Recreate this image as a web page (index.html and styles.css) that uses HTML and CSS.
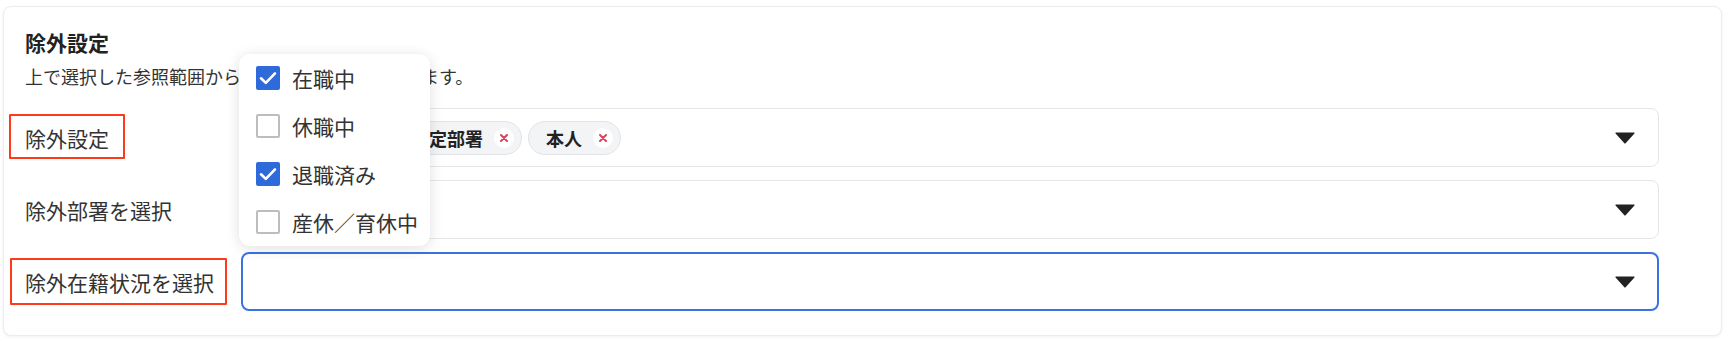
FILE: index.html
```html
<!DOCTYPE html>
<html lang="ja">
<head>
<meta charset="utf-8">
<title>除外設定</title>
<link rel="stylesheet" href="styles.css">
</head>
<body>
<section class="card">
  <h2 class="title">除外設定</h2>
  <p class="desc">上で選択した参照範囲から除外する条件を設定します。</p>
  <div class="rows">
    <div class="row">
      <div class="label"><span class="mark mark-a">除外設定</span></div>
      <div class="select">
        <div class="chips">
          <span class="chip">管理部門<span class="chip-x"><svg viewBox="0 0 10 10"><path d="M2 2L8 8M8 2L2 8"/></svg></span></span>
          <span class="chip">指定部署<span class="chip-x"><svg viewBox="0 0 10 10"><path d="M2 2L8 8M8 2L2 8"/></svg></span></span>
          <span class="chip">本人<span class="chip-x"><svg viewBox="0 0 10 10"><path d="M2 2L8 8M8 2L2 8"/></svg></span></span>
        </div>
        <svg class="caret" viewBox="0 0 20 12"><path d="M1 0.5H19a0.6 0.6 0 0 1 0.45 1L10.6 11.3a0.8 0.8 0 0 1-1.2 0L0.55 1.5A0.6 0.6 0 0 1 1 0.5Z"/></svg>
      </div>
    </div>
    <div class="row">
      <div class="label"><span>除外部署を選択</span></div>
      <div class="select">
        <div class="chips"></div>
        <svg class="caret" viewBox="0 0 20 12"><path d="M1 0.5H19a0.6 0.6 0 0 1 0.45 1L10.6 11.3a0.8 0.8 0 0 1-1.2 0L0.55 1.5A0.6 0.6 0 0 1 1 0.5Z"/></svg>
      </div>
    </div>
    <div class="row">
      <div class="label"><span class="mark mark-b">除外在籍状況を選択</span></div>
      <div class="select focused">
        <div class="chips"></div>
        <svg class="caret" viewBox="0 0 20 12"><path d="M1 0.5H19a0.6 0.6 0 0 1 0.45 1L10.6 11.3a0.8 0.8 0 0 1-1.2 0L0.55 1.5A0.6 0.6 0 0 1 1 0.5Z"/></svg>
      </div>
    </div>
  </div>
  <ul class="menu">
    <li class="opt"><span class="box checked"><svg viewBox="0 0 24 24"><path d="M5 12.3l4.8 4.6L19 7.4"/></svg></span>在職中</li>
    <li class="opt"><span class="box"></span>休職中</li>
    <li class="opt"><span class="box checked"><svg viewBox="0 0 24 24"><path d="M5 12.3l4.8 4.6L19 7.4"/></svg></span>退職済み</li>
    <li class="opt"><span class="box"></span>産休／育休中</li>
  </ul>
</section>
</body>
</html>
```
FILE: styles.css
```css
* { box-sizing: border-box; }
html, body { margin: 0; padding: 0; background: #ffffff; }
body {
  font-family: "Noto Sans CJK JP", "Noto Sans", sans-serif;
  color: #2b2b2b;
}
.card {
  position: relative;
  margin: 6px 3px 5px 3px;
  height: 330px;
  border: 1px solid #ececec;
  border-radius: 8px;
  background: #fff;
  box-shadow: 0 1px 3px rgba(0,0,0,0.06);
  padding: 21px 62px 0 21px;
}
.title {
  margin: 0;
  font-size: 21px;
  line-height: 28px;
  font-weight: 700;
  color: #222;
}
.desc {
  margin: 7px 0 0 0;
  font-size: 18px;
  line-height: 26px;
  color: #333;
}
.rows {
  margin-top: 19px;
  display: flex;
  flex-direction: column;
  gap: 13px;
}
.row {
  display: flex;
  align-items: center;
}
.label {
  width: 216px;
  flex: none;
  font-size: 21px;
  line-height: 28px;
  color: #333;
}
.mark { position: relative; display: inline-block; }
.mark::after {
  content: "";
  position: absolute;
  border: 2.5px solid #ff3a1a;
  border-radius: 1px;
}
.mark-a::after { left: -16px; right: -16px; top: -10px; bottom: -7px; }
.mark-b::after { left: -15px; right: -13px; top: -10px; bottom: -9px; }
.select {
  flex: 1;
  height: 59px;
  border: 1px solid #e6e6e6;
  border-radius: 8px;
  display: flex;
  align-items: center;
  padding: 0 23px 0 16px;
  background: #fff;
}
.select.focused {
  border: 2px solid #3a73e1;
  padding-left: 15px;
  padding-right: 22px;
}
.chips {
  flex: 1;
  display: flex;
  gap: 6px;
  align-items: center;
}
.chip {
  display: inline-flex;
  align-items: center;
  height: 34px;
  padding: 0 7px 0 17px;
  border: 1px solid #e2e3e7;
  border-radius: 17px;
  background: #f3f4f6;
  font-size: 18px;
  font-weight: 700;
  color: #222;
  gap: 11px;
}
.chip-x {
  width: 20px;
  height: 20px;
  border-radius: 50%;
  background: #fff;
  display: inline-flex;
  align-items: center;
  justify-content: center;
}
.chip-x svg { width: 10px; height: 10px; }
.chip-x path { stroke: #e0405a; stroke-width: 2; stroke-linecap: round; fill: none; }
.caret { width: 20px; height: 12px; flex: none; }
.caret path { fill: #222; }
.menu {
  position: absolute;
  left: 235px;
  top: 47px;
  width: 191px;
  margin: 0;
  padding: 0;
  list-style: none;
  background: #fff;
  border-radius: 11px;
  box-shadow: 0 2px 14px rgba(0,0,0,0.13);
}
.opt {
  height: 48px;
  display: flex;
  align-items: center;
  padding-left: 17px;
  gap: 12px;
  font-size: 21px;
  color: #333;
}
.box {
  width: 24px;
  height: 24px;
  border: 2px solid #bdbdbd;
  border-radius: 2px;
  flex: none;
  display: inline-flex;
  align-items: center;
  justify-content: center;
}
.box.checked {
  background: #2e6ad9;
  border-color: #2e6ad9;
}
.box svg { width: 24px; height: 24px; flex: none; }
.box path { stroke: #fff; stroke-width: 2.6; fill: none; stroke-linecap: round; stroke-linejoin: round; }
```
